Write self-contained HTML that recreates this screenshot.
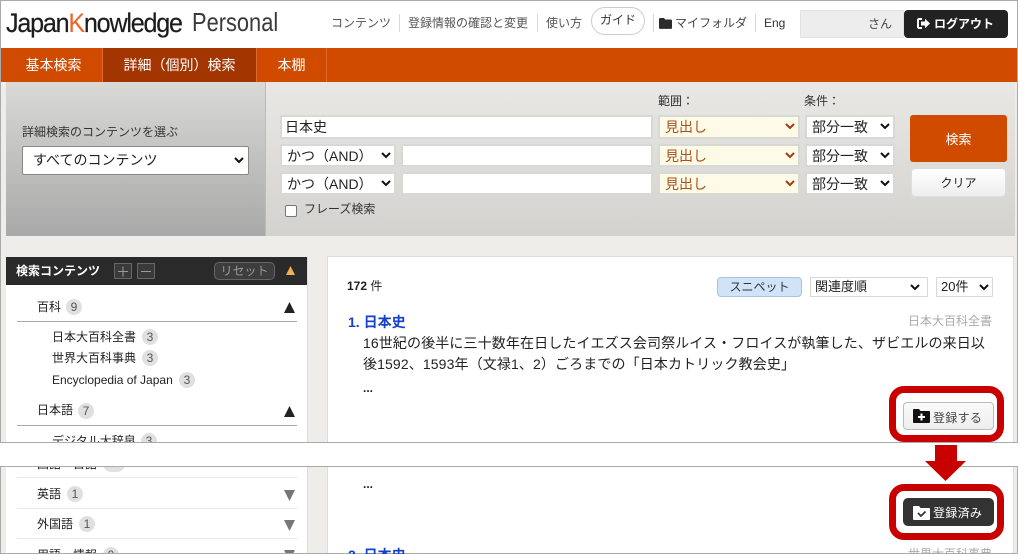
<!DOCTYPE html>
<html lang="ja"><head><meta charset="utf-8"><title>JapanKnowledge Personal</title>
<style>
html,body{margin:0;padding:0;background:#fff}
#p{position:relative;width:1018px;height:554px;overflow:hidden;background:#eeede9;font-family:"Liberation Sans","Noto Sans CJK JP",sans-serif;font-size:12px;color:#222}
#p div,#p span.a,#p svg{position:absolute}
.t{white-space:nowrap;line-height:16px}
.box{background:#fff;border:2px solid #d8d8d4;box-sizing:border-box;font-size:14px;line-height:21px;white-space:nowrap;padding-left:5px}
.y{background:#fdfbe7;color:#a8521c;padding-left:5px}
.b{border-radius:10px;background:#e0e0e0;color:#555;height:16px;width:16px;line-height:16px;text-align:center;font-size:12px}
.sep{width:1px;height:18px;background:#d8d8d8;top:14px}
.nav{color:#555;top:15px}
.tab{top:48px;height:34px;line-height:34px;color:#fff;font-size:14px;text-align:center;border-right:1px solid #dd6a30;box-sizing:border-box}
</style></head><body><div id="p">
<div style="left:0;top:0;width:1018px;height:48px;background:#fff"></div>
<div class="t" style="left:6px;top:5px;font-size:27px;line-height:36px;letter-spacing:-1.3px;color:#1c1c1c;transform:scaleX(.93);transform-origin:0 0;-webkit-text-stroke:.2px #1c1c1c">Japan<span style="color:#e8682a;-webkit-text-stroke:0">K</span>nowledge</div>
<div class="t" style="left:192px;top:4px;font-size:26px;line-height:36px;color:#3a3a3a;transform:scaleX(.84);transform-origin:0 0">Personal</div>

<div class="t nav" style="left:331px">コンテンツ</div><div class="sep" style="left:399px"></div>
<div class="t nav" style="left:408px">登録情報の確認と変更</div><div class="sep" style="left:537px"></div>
<div class="t nav" style="left:546px">使い方</div>
<div class="t" style="left:591px;top:7px;width:54px;height:28px;border:1px solid #ccc;border-radius:14px;line-height:24px;text-align:center;font-size:12px;color:#333;box-sizing:border-box">ガイド</div>
<div class="sep" style="left:653px"></div>
<svg style="left:659px;top:18px" width="13" height="11" viewBox="0 0 13 11"><path fill="#2b2b2b" d="M0 1.2C0 .5.5 0 1.2 0H5l1.2 1.5h5.6c.7 0 1.2.5 1.2 1.2v7c0 .7-.5 1.2-1.2 1.2H1.200C.5 10.900 0 10.400 0 9.700z"/></svg>
<div class="t nav" style="left:675px;color:#444">マイフォルダ</div><div class="sep" style="left:755px"></div>
<div class="t nav" style="left:764px;color:#333">Eng</div>
<div style="left:800px;top:10px;width:104px;height:28px;background:#ededed;border:1px solid #e2e2e2;box-sizing:border-box"></div>
<div class="t" style="left:868px;top:16px;color:#444;font-size:12px">さん</div>
<div style="left:904px;top:10px;width:104px;height:28px;background:#222;border-radius:4px"></div>
<svg style="left:917px;top:18px" width="13" height="11" viewBox="0 0 13 11"><path fill="#fff" d="M5 0H2C.9 0 0 .9 0 2v7c0 1.100.9 2 2 2h3V9H2V2h3z"/><path fill="#fff" d="M4 3.500h4V.8l5 4.700-5 4.700V7.500H4z"/></svg>
<div class="t" style="left:934px;top:16px;color:#fff;font-weight:700;font-size:12px">ログアウト</div>

<div style="left:0;top:48px;width:1018px;height:34px;background:#d04a00"></div>
<div class="tab" style="left:1px;width:102px;padding-left:4px">基本検索</div>
<div class="tab" style="left:103px;width:154px;background:#a33500">詳細（個別）検索</div>
<div class="tab" style="left:257px;width:70px">本棚</div>

<div style="left:6px;top:82px;width:259px;height:154px;background:linear-gradient(#d9d9d6,#a9a9a9)"></div>
<div style="left:265px;top:82px;width:750px;height:154px;background:linear-gradient(#e9e8e4,#d3d2ce);border-left:1px solid #bbb;box-sizing:border-box"></div>
<div class="t" style="left:22px;top:124px;color:#333;font-size:12px">詳細検索のコンテンツを選ぶ</div>
<div class="box" style="left:22px;top:146px;width:227px;height:29px;border:1px solid #888;border-radius:2px;line-height:26px;padding-left:10px">すべてのコンテンツ</div>

<div class="t" style="left:658px;top:93px;font-size:12px;color:#333">範囲：</div>
<div class="t" style="left:804px;top:93px;font-size:12px;color:#333">条件：</div>

<div class="box" style="left:280px;top:115px;width:373px;height:24px;padding-left:3px">日本史</div>
<div class="box" style="left:280px;top:144px;width:116px;height:23px">かつ（AND）</div>
<div class="box" style="left:401px;top:144px;width:252px;height:23px"></div>
<div class="box" style="left:280px;top:172px;width:116px;height:23px">かつ（AND）</div>
<div class="box" style="left:401px;top:172px;width:252px;height:23px"></div>

<div class="box y" style="left:658px;top:115px;width:142px;height:24px">見出し</div>
<div class="box y" style="left:658px;top:144px;width:142px;height:23px">見出し</div>
<div class="box y" style="left:658px;top:172px;width:142px;height:23px">見出し</div>
<div class="box" style="left:805px;top:115px;width:90px;height:24px">部分一致</div>
<div class="box" style="left:805px;top:144px;width:90px;height:23px">部分一致</div>
<div class="box" style="left:805px;top:172px;width:90px;height:23px">部分一致</div>

<svg style="left:0;top:0" width="1018" height="240" viewBox="0 0 1018 240" fill="none" stroke-width="2">
<path stroke="#111" d="M235 158l4 4 4-4M382 153l4 4 4-4M382 181l4 4 4-4M881 124l4 4 4-4M881 153l4 4 4-4M881 181l4 4 4-4"/>
<path stroke="#a33a10" d="M786 124l4 4 4-4M786 153l4 4 4-4M786 181l4 4 4-4"/>
</svg>

<div style="left:285px;top:205px;width:12px;height:12px;background:#fff;border:1px solid #777;border-radius:2px;box-sizing:border-box"></div>
<div class="t" style="left:304px;top:201px;color:#333;font-size:12px">フレーズ検索</div>
<div class="t" style="left:910px;top:115px;width:97px;height:47px;background:#d04a00;border-radius:3px;color:#fff;text-align:center;line-height:49px;font-size:13px">検索</div>
<div class="t" style="left:911px;top:168px;width:95px;height:29px;background:linear-gradient(#fff,#eee);border-radius:4px;border:1px solid #ddd;box-sizing:border-box;text-align:center;line-height:28px;color:#222;font-size:12px">クリア</div>

<div style="left:6px;top:257px;width:302px;height:300px;background:#fff;border-right:1px solid #ddd;box-sizing:border-box"></div>
<div style="left:6px;top:257px;width:301px;height:28px;background:#2a2a2a"></div>
<div class="t" style="left:16px;top:263px;color:#fff;font-weight:700;font-size:12px">検索コンテンツ</div>
<div style="left:114px;top:263px;width:18px;height:16px;border:1px solid #666;background:#3a3a3a;box-sizing:border-box"></div>
<div style="left:137px;top:263px;width:18px;height:16px;border:1px solid #666;background:#3a3a3a;box-sizing:border-box"></div>
<svg style="left:114px;top:263px" width="41" height="16" viewBox="0 0 41 16" stroke="#999" fill="none"><path d="M4 8.500h10M9 3.500v10M27 8.500h10"/></svg>
<div class="t" style="left:214px;top:262px;width:61px;height:18px;border:1px solid #666;border-radius:5px;background:#3d3d3d;color:#999;text-align:center;font-size:12px;line-height:16px;box-sizing:border-box">リセット</div>
<svg style="left:0;top:0" width="320" height="554" viewBox="0 0 320 554">
<path fill="#f0b050" d="M286 275l4.500-9 4.500 9z"/>
<path fill="#222" d="M284 313l5.500-11 5.500 11zM284 417l5.500-11 5.500 11z"/>
<path fill="#777" d="M284 490l5.500 11 5.500-11zM284 520l5.500 11 5.500-11zM284 550l5.500 11 5.500-11z"/>
</svg>
<div class="t" style="left:37px;top:299px">百科</div><div class="b" style="left:66px;top:299px">9</div>
<div style="left:17px;top:321px;width:280px;height:1px;background:#aaa"></div>
<div class="t" style="left:52px;top:329px">日本大百科全書</div><div class="b" style="left:142px;top:329px">3</div>
<div class="t" style="left:52px;top:350px">世界大百科事典</div><div class="b" style="left:142px;top:350px">3</div>
<div class="t" style="left:52px;top:372px">Encyclopedia of Japan</div><div class="b" style="left:179px;top:372px">3</div>
<div class="t" style="left:37px;top:402px">日本語</div><div class="b" style="left:78px;top:403px">7</div>
<div style="left:17px;top:425px;width:280px;height:1px;background:#aaa"></div>
<div class="t" style="left:52px;top:433px">デジタル大辞泉</div><div class="b" style="left:141px;top:433px">3</div>
<div class="t" style="left:37px;top:456px">国語・古語</div><div class="b" style="left:103px;top:456px;width:22px"></div>
<div style="left:17px;top:477px;width:280px;height:1px;background:#e8e8e8"></div>
<div class="t" style="left:37px;top:486px">英語</div><div class="b" style="left:67px;top:486px">1</div>
<div style="left:17px;top:508px;width:280px;height:1px;background:#e8e8e8"></div>
<div class="t" style="left:37px;top:516px">外国語</div><div class="b" style="left:79px;top:516px">1</div>
<div style="left:17px;top:538px;width:280px;height:1px;background:#e8e8e8"></div>
<div class="t" style="left:37px;top:547px">用語・情報</div><div class="b" style="left:103px;top:547px">9</div>

<div style="left:327px;top:256px;width:687px;height:300px;background:#fff;border:1px solid #ddd;box-sizing:border-box"></div>
<div class="t" style="left:347px;top:278px;font-size:12px"><b>172</b> 件</div>
<div class="t" style="left:717px;top:277px;width:85px;height:20px;border:1px solid #a9c2dd;border-radius:4px;background:#cfe3f9;text-align:center;line-height:18px;font-size:12px;color:#333;box-sizing:border-box">スニペット</div>
<div class="box" style="left:810px;top:277px;width:118px;height:20px;border-width:1px;line-height:18px;padding-left:4px;font-size:13px">関連度順</div>
<div class="box" style="left:936px;top:277px;width:57px;height:20px;border-width:1px;line-height:18px;padding-left:4px;font-size:13px">20件</div>
<svg style="left:900px;top:280px" width="100" height="16" viewBox="0 0 100 16" fill="none" stroke="#111" stroke-width="2"><path d="M11 5l4 4 4-4M80 5l4 4 4-4"/></svg>
<div class="t" style="left:348px;top:314px;color:#1640c8;font-weight:700;font-size:14px">1. 日本史</div>
<div class="t" style="left:908px;top:313px;color:#aaa;font-size:12px">日本大百科全書</div>
<div class="t" style="left:363px;top:333px;font-size:14px;line-height:21px;width:632px;white-space:normal;letter-spacing:.12px">16世紀の後半に三十数年在日したイエズス会司祭ルイス・フロイスが執筆した、ザビエルの来日以後1592、1593年（文禄1、2）ごろまでの「日本カトリック教会史」</div>
<div class="t" style="left:363px;top:380px;font-size:12px;font-weight:700">...</div>

<div style="left:889px;top:386px;width:115px;height:56px;border:7px solid #c80000;border-radius:15px;box-sizing:border-box"></div>
<div style="left:903px;top:402px;width:91px;height:28px;background:linear-gradient(#fafafa,#eee);border:1px solid #bbb;border-radius:4px;box-sizing:border-box"></div>
<svg style="left:913px;top:409px" width="17" height="14" viewBox="0 0 17 14"><path fill="#111" d="M0 1C0 .4.400 0 1 0h5l1.500 2H16c.6 0 1 .4 1 1v10c0 .6-.4 1-1 1H1c-.6 0-1-.4-1-1z"/><path fill="#fff" d="M7.500 4.500h2v2.500H12v2H9.500v2.500h-2V9H5V7h2.500z"/></svg>
<div class="t" style="left:933px;top:410px;color:#444;font-size:12px;letter-spacing:.3px">登録する</div>

<div style="left:0;top:0;width:1018px;height:554px;border:1px solid #aaa;box-sizing:border-box"></div>

<div style="left:0;top:442px;width:1018px;height:25px;background:#fff;border-top:1px solid #aaa;border-bottom:1px solid #aaa;box-sizing:border-box"></div>
<div style="left:935px;top:445px;width:22px;height:16px;background:#c80000"></div>
<svg style="left:925px;top:460px" width="42" height="22" viewBox="0 0 42 22"><path fill="#c80000" d="M0 1h41L20.500 21z"/></svg>

<div class="t" style="left:363px;top:476px;font-size:12px;font-weight:700">...</div>
<div style="left:889px;top:484px;width:115px;height:56px;border:7px solid #c80000;border-radius:15px;box-sizing:border-box"></div>
<div style="left:903px;top:498px;width:91px;height:28px;background:#333;border-radius:5px"></div>
<svg style="left:913px;top:506px" width="17" height="14" viewBox="0 0 17 14"><path fill="#fff" d="M0 1C0 .4.400 0 1 0h5l1.500 2H16c.6 0 1 .4 1 1v10c0 .6-.4 1-1 1H1c-.6 0-1-.4-1-1z"/><path fill="none" stroke="#333" stroke-width="1.800" d="M5 7l3 3 4.500-4.500"/></svg>
<div class="t" style="left:933px;top:505px;color:#fff;font-size:12px;letter-spacing:.3px">登録済み</div>

<div class="t" style="left:348px;top:547px;color:#1640c8;font-weight:700;font-size:14px">2. 日本史</div>
<div class="t" style="left:908px;top:546px;color:#aaa;font-size:12px">世界大百科事典</div>
</div></body></html>
